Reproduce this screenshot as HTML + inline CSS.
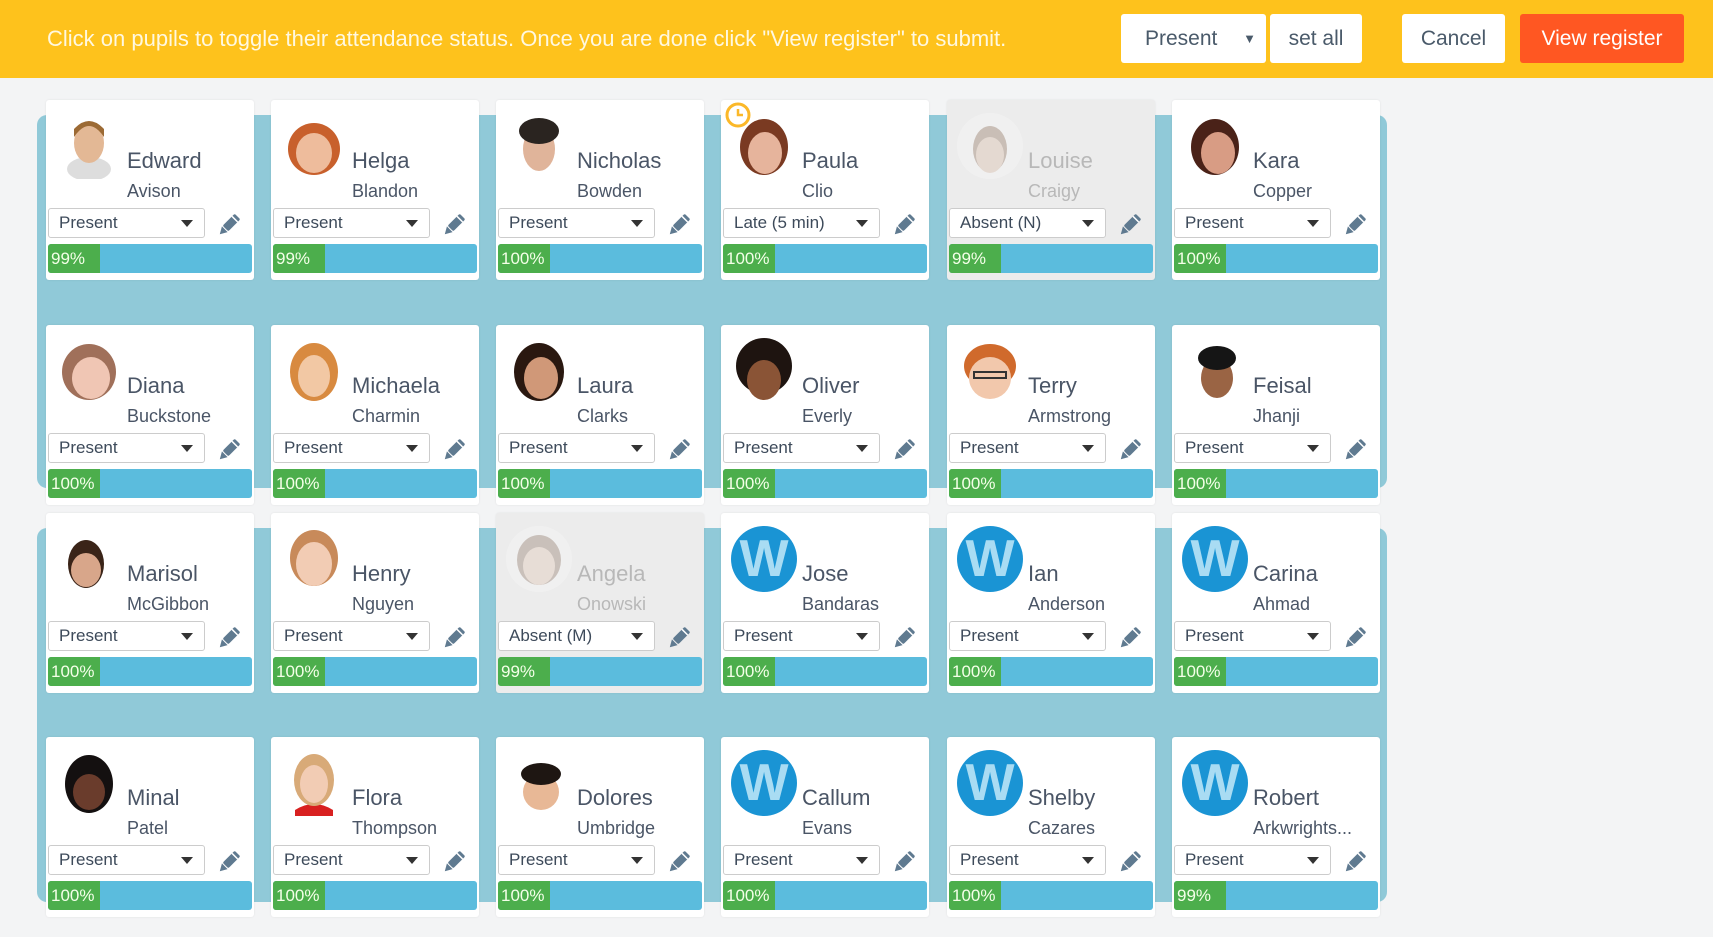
<!DOCTYPE html>
<html><head><meta charset="utf-8"><style>
*{box-sizing:border-box;margin:0;padding:0}
body{width:1713px;height:937px;background:#f3f4f5;font-family:"Liberation Sans",sans-serif;position:relative;overflow:hidden}
.hdr{position:absolute;left:0;top:0;width:1713px;height:78px;background:#fec21c}
.hdr .msg{position:absolute;left:47px;top:26px;font-size:22px;color:#fff8e0}
.btn{position:absolute;top:14px;height:49px;background:#fff;border-radius:3px;font-size:21px;color:#4a5a6a;text-align:center;line-height:49px}
.panel{position:absolute;left:37px;width:1350px;background:#90c9d8;border-radius:10px}
.card{position:absolute;width:208px;height:180px;background:#fff;border-radius:3px;box-shadow:0 0 2px rgba(0,0,0,.08)}
.card.ab{background:#ececec}
.av{position:absolute;left:10px;top:13px;width:66px;height:66px}
.f{position:absolute;left:81px;top:48px;font-size:22px;color:#4a5566;white-space:nowrap}
.l{position:absolute;left:81px;top:81px;font-size:18px;color:#4a5566;white-space:nowrap}
.ab .f,.ab .l{color:#b8b8b8}
.ab .av{opacity:.35}
.sel{position:absolute;left:2px;top:108px;width:157px;height:30px;border:1px solid #ccc;border-radius:3px;background:#fff;font-size:17px;color:#3d4a5a;padding-left:10px;line-height:28px}
.sel:after{content:"";position:absolute;right:11px;top:11px;border-left:6px solid transparent;border-right:6px solid transparent;border-top:7px solid #333}
.pen{position:absolute;left:170px;top:113px;width:26px;height:24px}
.bar{position:absolute;left:2px;top:144px;width:204px;height:29px;background:#5bbcdd;border-radius:3px;overflow:hidden}
.bar span{position:absolute;left:0;top:0;height:29px;width:52px;background:#4cae4c;color:#f4ffe8;font-size:17px;line-height:29px;padding-left:3px}
.w{position:absolute;left:10px;top:13px;width:66px;height:66px;border-radius:50%;background:#1a94d4;color:#a9dcf3;font-size:52px;font-weight:bold;text-align:center;line-height:66px}
</style></head><body>
<div class="hdr"><div class="msg">Click on pupils to toggle their attendance status. Once you are done click "View register" to submit.</div>
<div class="btn" style="left:1121px;width:145px;text-align:left;padding-left:24px">Present<span style="position:absolute;right:10px;font-size:13px">▼</span></div>
<div class="btn" style="left:1270px;width:92px">set all</div>
<div class="btn" style="left:1402px;width:103px">Cancel</div>
<div class="btn" style="left:1520px;width:164px;background:#ff5722;color:#fff">View register</div>
</div>
<div class="panel" style="top:115px;height:373px"></div>
<div class="panel" style="top:528px;height:374px"></div>

<svg width="0" height="0" style="position:absolute"><defs>
<g id="pn"><g transform="rotate(45 13 12)"><rect x="9" y="0" width="8" height="17" rx="1.5" fill="#5f7a90"/><rect x="9" y="3" width="8" height="1.5" fill="#fff"/><path d="M9 18 L17 18 L13 25 Z" fill="#5f7a90"/></g></g>
</defs></svg>

<!-- Row 1 -->
<div class="card" style="left:46px;top:100px"><svg class="av" viewBox="0 0 66 66"><ellipse cx="33" cy="56" rx="22" ry="12" fill="#ddd"/><ellipse cx="33" cy="30" rx="15" ry="20" fill="#e3b895"/><path d="M18 24 Q33 2 48 24 L48 16 Q33 0 18 16Z" fill="#9c6a34"/></svg><div class="f">Edward</div><div class="l">Avison</div><div class="sel">Present</div><svg class="pen"><use href="#pn"/></svg><div class="bar"><span>99%</span></div></div>
<div class="card" style="left:271px;top:100px"><svg class="av" viewBox="0 0 66 66"><ellipse cx="33" cy="36" rx="26" ry="26" fill="#c8602c"/><ellipse cx="33" cy="40" rx="18" ry="20" fill="#eebc9c"/></svg><div class="f">Helga</div><div class="l">Blandon</div><div class="sel">Present</div><svg class="pen"><use href="#pn"/></svg><div class="bar"><span>99%</span></div></div>
<div class="card" style="left:496px;top:100px"><svg class="av" viewBox="0 0 66 66"><ellipse cx="33" cy="36" rx="16" ry="22" fill="#e0b49a"/><ellipse cx="33" cy="18" rx="20" ry="13" fill="#2a2420"/></svg><div class="f">Nicholas</div><div class="l">Bowden</div><div class="sel">Present</div><svg class="pen"><use href="#pn"/></svg><div class="bar"><span>100%</span></div></div>
<div class="card" style="left:721px;top:100px"><svg style="position:absolute;left:4px;top:2px" width="26" height="26"><circle cx="13" cy="13" r="11" fill="none" stroke="#fbb829" stroke-width="3"/><path d="M13 7 V13 H18" stroke="#fbb829" stroke-width="2.5" fill="none"/></svg><svg class="av" viewBox="0 0 66 66"><ellipse cx="33" cy="34" rx="24" ry="28" fill="#7a3a22"/><ellipse cx="34" cy="40" rx="17" ry="21" fill="#e6b49c"/></svg><div class="f">Paula</div><div class="l">Clio</div><div class="sel">Late (5 min)</div><svg class="pen"><use href="#pn"/></svg><div class="bar"><span>100%</span></div></div>
<div class="card ab" style="left:947px;top:100px"><svg class="av" viewBox="0 0 66 66"><circle cx="33" cy="33" r="33" fill="#fafafa"/><ellipse cx="33" cy="36" rx="17" ry="23" fill="#8a6a55"/><ellipse cx="33" cy="42" rx="14" ry="18" fill="#d8b8a2"/></svg><div class="f">Louise</div><div class="l">Craigy</div><div class="sel">Absent (N)</div><svg class="pen"><use href="#pn"/></svg><div class="bar"><span>99%</span></div></div>
<div class="card" style="left:1172px;top:100px"><svg class="av" viewBox="0 0 66 66"><ellipse cx="33" cy="34" rx="24" ry="28" fill="#4a2218"/><ellipse cx="36" cy="40" rx="17" ry="21" fill="#d89c84"/></svg><div class="f">Kara</div><div class="l">Copper</div><div class="sel">Present</div><svg class="pen"><use href="#pn"/></svg><div class="bar"><span>100%</span></div></div>

<!-- Row 2 -->
<div class="card" style="left:46px;top:325px"><svg class="av" viewBox="0 0 66 66"><ellipse cx="33" cy="34" rx="27" ry="28" fill="#a0705a"/><ellipse cx="35" cy="40" rx="19" ry="21" fill="#f0c6b4"/></svg><div class="f">Diana</div><div class="l">Buckstone</div><div class="sel">Present</div><svg class="pen"><use href="#pn"/></svg><div class="bar"><span>100%</span></div></div>
<div class="card" style="left:271px;top:325px"><svg class="av" viewBox="0 0 66 66"><ellipse cx="33" cy="34" rx="24" ry="29" fill="#d88a40"/><ellipse cx="33" cy="38" rx="16" ry="21" fill="#f2c8a4"/></svg><div class="f">Michaela</div><div class="l">Charmin</div><div class="sel">Present</div><svg class="pen"><use href="#pn"/></svg><div class="bar"><span>100%</span></div></div>
<div class="card" style="left:496px;top:325px"><svg class="av" viewBox="0 0 66 66"><ellipse cx="33" cy="34" rx="25" ry="29" fill="#2a1810"/><ellipse cx="35" cy="40" rx="17" ry="21" fill="#d09878"/></svg><div class="f">Laura</div><div class="l">Clarks</div><div class="sel">Present</div><svg class="pen"><use href="#pn"/></svg><div class="bar"><span>100%</span></div></div>
<div class="card" style="left:721px;top:325px"><svg class="av" viewBox="0 0 66 66"><circle cx="33" cy="28" r="28" fill="#1e1410"/><ellipse cx="33" cy="42" rx="17" ry="20" fill="#8a5436"/></svg><div class="f">Oliver</div><div class="l">Everly</div><div class="sel">Present</div><svg class="pen"><use href="#pn"/></svg><div class="bar"><span>100%</span></div></div>
<div class="card" style="left:947px;top:325px"><svg class="av" viewBox="0 0 66 66"><ellipse cx="33" cy="28" rx="26" ry="22" fill="#d06a2c"/><ellipse cx="33" cy="40" rx="21" ry="21" fill="#f2c8ac"/><rect x="17" y="34" width="32" height="6" fill="none" stroke="#333" stroke-width="2"/></svg><div class="f">Terry</div><div class="l">Armstrong</div><div class="sel">Present</div><svg class="pen"><use href="#pn"/></svg><div class="bar"><span>100%</span></div></div>
<div class="card" style="left:1172px;top:325px"><svg class="av" viewBox="0 0 66 66"><ellipse cx="35" cy="40" rx="16" ry="20" fill="#9a6444"/><ellipse cx="35" cy="20" rx="19" ry="12" fill="#151515"/></svg><div class="f">Feisal</div><div class="l">Jhanji</div><div class="sel">Present</div><svg class="pen"><use href="#pn"/></svg><div class="bar"><span>100%</span></div></div>

<!-- Row 3 -->
<div class="card" style="left:46px;top:513px"><svg class="av" viewBox="0 0 66 66"><ellipse cx="30" cy="38" rx="18" ry="24" fill="#3a2418"/><ellipse cx="30" cy="44" rx="15" ry="17" fill="#d8a68a"/></svg><div class="f">Marisol</div><div class="l">McGibbon</div><div class="sel">Present</div><svg class="pen"><use href="#pn"/></svg><div class="bar"><span>100%</span></div></div>
<div class="card" style="left:271px;top:513px"><svg class="av" viewBox="0 0 66 66"><ellipse cx="33" cy="32" rx="24" ry="28" fill="#c88a5a"/><ellipse cx="33" cy="38" rx="18" ry="22" fill="#f2ccb4"/></svg><div class="f">Henry</div><div class="l">Nguyen</div><div class="sel">Present</div><svg class="pen"><use href="#pn"/></svg><div class="bar"><span>100%</span></div></div>
<div class="card ab" style="left:496px;top:513px"><svg class="av" viewBox="0 0 66 66"><circle cx="33" cy="33" r="33" fill="#fafafa"/><ellipse cx="33" cy="34" rx="22" ry="25" fill="#8a7060"/><ellipse cx="33" cy="40" rx="16" ry="19" fill="#e0c4b0"/></svg><div class="f">Angela</div><div class="l">Onowski</div><div class="sel">Absent (M)</div><svg class="pen"><use href="#pn"/></svg><div class="bar"><span>99%</span></div></div>
<div class="card" style="left:721px;top:513px"><div class="w">W</div><div class="f">Jose</div><div class="l">Bandaras</div><div class="sel">Present</div><svg class="pen"><use href="#pn"/></svg><div class="bar"><span>100%</span></div></div>
<div class="card" style="left:947px;top:513px"><div class="w">W</div><div class="f">Ian</div><div class="l">Anderson</div><div class="sel">Present</div><svg class="pen"><use href="#pn"/></svg><div class="bar"><span>100%</span></div></div>
<div class="card" style="left:1172px;top:513px"><div class="w">W</div><div class="f">Carina</div><div class="l">Ahmad</div><div class="sel">Present</div><svg class="pen"><use href="#pn"/></svg><div class="bar"><span>100%</span></div></div>

<!-- Row 4 -->
<div class="card" style="left:46px;top:737px"><svg class="av" viewBox="0 0 66 66"><ellipse cx="33" cy="34" rx="24" ry="29" fill="#141010"/><ellipse cx="33" cy="42" rx="16" ry="18" fill="#6a3c2c"/></svg><div class="f">Minal</div><div class="l">Patel</div><div class="sel">Present</div><svg class="pen"><use href="#pn"/></svg><div class="bar"><span>100%</span></div></div>
<div class="card" style="left:271px;top:737px"><svg class="av" viewBox="0 0 66 66"><path d="M14 60 Q33 48 52 60 L52 66 L14 66Z" fill="#d82020"/><ellipse cx="33" cy="30" rx="20" ry="26" fill="#d8aa78"/><ellipse cx="33" cy="34" rx="14" ry="19" fill="#f2ccb4"/></svg><div class="f">Flora</div><div class="l">Thompson</div><div class="sel">Present</div><svg class="pen"><use href="#pn"/></svg><div class="bar"><span>100%</span></div></div>
<div class="card" style="left:496px;top:737px"><svg class="av" viewBox="0 0 66 66"><ellipse cx="35" cy="42" rx="18" ry="18" fill="#e8b896"/><ellipse cx="35" cy="24" rx="20" ry="11" fill="#1e1612"/></svg><div class="f">Dolores</div><div class="l">Umbridge</div><div class="sel">Present</div><svg class="pen"><use href="#pn"/></svg><div class="bar"><span>100%</span></div></div>
<div class="card" style="left:721px;top:737px"><div class="w">W</div><div class="f">Callum</div><div class="l">Evans</div><div class="sel">Present</div><svg class="pen"><use href="#pn"/></svg><div class="bar"><span>100%</span></div></div>
<div class="card" style="left:947px;top:737px"><div class="w">W</div><div class="f">Shelby</div><div class="l">Cazares</div><div class="sel">Present</div><svg class="pen"><use href="#pn"/></svg><div class="bar"><span>100%</span></div></div>
<div class="card" style="left:1172px;top:737px"><div class="w">W</div><div class="f">Robert</div><div class="l">Arkwrights...</div><div class="sel">Present</div><svg class="pen"><use href="#pn"/></svg><div class="bar"><span>99%</span></div></div>
</body></html>
